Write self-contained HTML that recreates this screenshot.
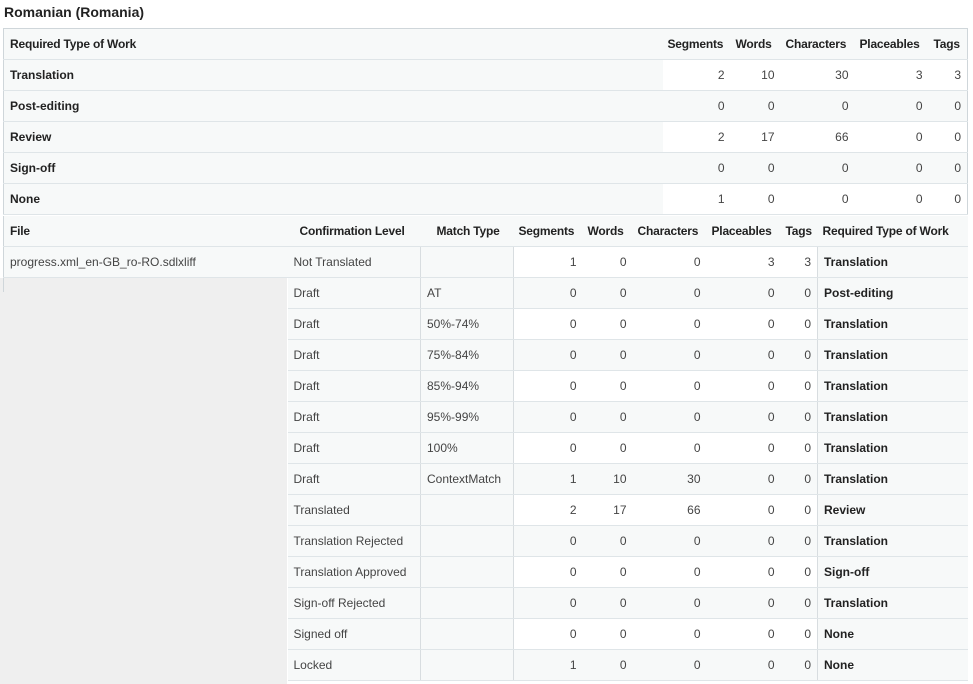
<!DOCTYPE html>
<html><head><meta charset="utf-8"><style>
body{margin:0;background:#fff;font-family:"Liberation Sans",sans-serif;font-size:12px;color:#222;width:973px;height:684px;overflow:hidden;position:relative}
h1{position:absolute;left:4px;top:4px;margin:0;font-size:14px;font-weight:bold;color:#222}
table{position:absolute;border-collapse:collapse;table-layout:fixed}
td,th{height:30px;padding:0 6px;border-bottom:1px solid #dfe5e8;white-space:nowrap;overflow:hidden}
th{font-weight:bold;background:#f7f9f9;text-align:left;color:#222}
td{color:#444}
td.n{text-align:right}
tr.w td.n{background:#fff}
tr.g td.n{background:#f7f9f9}
td.c{background:#f7f9f9;border-right:1px solid #d8dde0}
td.m{background:#f7f9f9;border-right:1px solid #d8dde0}
th.r{border-left:1px solid #d8dde0}
#t1{left:3px;top:28px;width:964px;border-top:1px solid #cfd6da;border-left:1px solid #cfd6da;border-right:1px solid #cfd6da}
#t2{left:3px;top:216px;width:964px}
.hd th{text-align:left;padding:0 3px 0 5px;letter-spacing:-0.2px}
.hd th.l{text-align:left;padding:0 6px}
.grey{position:absolute;left:0;top:278px;width:287px;height:406px;background:#efefef}
.ln{position:absolute;left:3px;top:278px;width:1px;height:14px;background:#cfd6da}
</style></head><body>
<h1>Romanian (Romania)</h1>
<table id="t1">
<colgroup><col style="width:659px"><col style="width:68px"><col style="width:50px"><col style="width:74px"><col style="width:74px"><col style="width:39px"></colgroup>
<tr class="hd"><th class="l">Required Type of Work</th><th>Segments</th><th>Words</th><th>Characters</th><th>Placeables</th><th>Tags</th></tr>
<tr class="w"><th>Translation</th><td class="n">2</td><td class="n">10</td><td class="n">30</td><td class="n">3</td><td class="n">3</td></tr>
<tr class="g"><th>Post-editing</th><td class="n">0</td><td class="n">0</td><td class="n">0</td><td class="n">0</td><td class="n">0</td></tr>
<tr class="w"><th>Review</th><td class="n">2</td><td class="n">17</td><td class="n">66</td><td class="n">0</td><td class="n">0</td></tr>
<tr class="g"><th>Sign-off</th><td class="n">0</td><td class="n">0</td><td class="n">0</td><td class="n">0</td><td class="n">0</td></tr>
<tr class="w"><th>None</th><td class="n">1</td><td class="n">0</td><td class="n">0</td><td class="n">0</td><td class="n">0</td></tr>
</table>
<div class="grey"></div><div class="ln"></div>
<table id="t2">
<colgroup><col style="width:284px"><col style="width:133px"><col style="width:93px"><col style="width:69px"><col style="width:50px"><col style="width:74px"><col style="width:74px"><col style="width:37px"><col style="width:150px"></colgroup>
<tr class="hd"><th class="l" style="border-left:1px solid #cfd6da">File</th><th style="padding-left:12px">Confirmation Level</th><th style="padding-left:16px">Match Type</th><th>Segments</th><th>Words</th><th>Characters</th><th>Placeables</th><th>Tags</th><th>Required Type of Work</th></tr>
<tr class="w"><td style="background:#f7f9f9;border-left:1px solid #cfd6da">progress.xml_en-GB_ro-RO.sdlxliff</td><td class="c">Not Translated</td><td class="m"></td><td class="n">1</td><td class="n">0</td><td class="n">0</td><td class="n">3</td><td class="n">3</td><th class="r">Translation</th></tr>
<tr class="g"><td style="border:0;background:none"></td><td class="c">Draft</td><td class="m">AT</td><td class="n">0</td><td class="n">0</td><td class="n">0</td><td class="n">0</td><td class="n">0</td><th class="r">Post-editing</th></tr>
<tr class="w"><td style="border:0;background:none"></td><td class="c">Draft</td><td class="m">50%-74%</td><td class="n">0</td><td class="n">0</td><td class="n">0</td><td class="n">0</td><td class="n">0</td><th class="r">Translation</th></tr>
<tr class="g"><td style="border:0;background:none"></td><td class="c">Draft</td><td class="m">75%-84%</td><td class="n">0</td><td class="n">0</td><td class="n">0</td><td class="n">0</td><td class="n">0</td><th class="r">Translation</th></tr>
<tr class="w"><td style="border:0;background:none"></td><td class="c">Draft</td><td class="m">85%-94%</td><td class="n">0</td><td class="n">0</td><td class="n">0</td><td class="n">0</td><td class="n">0</td><th class="r">Translation</th></tr>
<tr class="g"><td style="border:0;background:none"></td><td class="c">Draft</td><td class="m">95%-99%</td><td class="n">0</td><td class="n">0</td><td class="n">0</td><td class="n">0</td><td class="n">0</td><th class="r">Translation</th></tr>
<tr class="w"><td style="border:0;background:none"></td><td class="c">Draft</td><td class="m">100%</td><td class="n">0</td><td class="n">0</td><td class="n">0</td><td class="n">0</td><td class="n">0</td><th class="r">Translation</th></tr>
<tr class="g"><td style="border:0;background:none"></td><td class="c">Draft</td><td class="m">ContextMatch</td><td class="n">1</td><td class="n">10</td><td class="n">30</td><td class="n">0</td><td class="n">0</td><th class="r">Translation</th></tr>
<tr class="w"><td style="border:0;background:none"></td><td class="c">Translated</td><td class="m"></td><td class="n">2</td><td class="n">17</td><td class="n">66</td><td class="n">0</td><td class="n">0</td><th class="r">Review</th></tr>
<tr class="g"><td style="border:0;background:none"></td><td class="c">Translation Rejected</td><td class="m"></td><td class="n">0</td><td class="n">0</td><td class="n">0</td><td class="n">0</td><td class="n">0</td><th class="r">Translation</th></tr>
<tr class="w"><td style="border:0;background:none"></td><td class="c">Translation Approved</td><td class="m"></td><td class="n">0</td><td class="n">0</td><td class="n">0</td><td class="n">0</td><td class="n">0</td><th class="r">Sign-off</th></tr>
<tr class="g"><td style="border:0;background:none"></td><td class="c">Sign-off Rejected</td><td class="m"></td><td class="n">0</td><td class="n">0</td><td class="n">0</td><td class="n">0</td><td class="n">0</td><th class="r">Translation</th></tr>
<tr class="w"><td style="border:0;background:none"></td><td class="c">Signed off</td><td class="m"></td><td class="n">0</td><td class="n">0</td><td class="n">0</td><td class="n">0</td><td class="n">0</td><th class="r">None</th></tr>
<tr class="g"><td style="border:0;background:none"></td><td class="c">Locked</td><td class="m"></td><td class="n">1</td><td class="n">0</td><td class="n">0</td><td class="n">0</td><td class="n">0</td><th class="r">None</th></tr>
</table>
</body></html>
